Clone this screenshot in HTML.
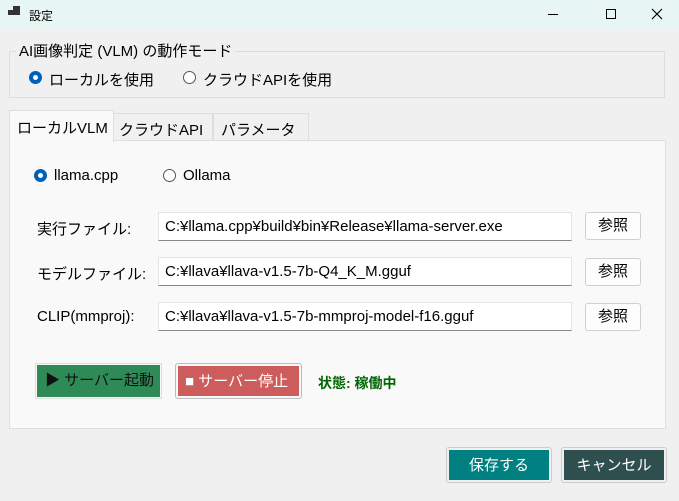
<!DOCTYPE html>
<html><head><meta charset="utf-8"><style>
*{box-sizing:border-box;margin:0;padding:0}
body{width:679px;height:501px;background:#f0f0f0;font-family:"Liberation Sans","Noto Sans CJK JP",sans-serif;font-size:15px;color:#000;position:relative;overflow:hidden}
.a{position:absolute;white-space:nowrap}
.title{left:0;top:0;width:679px;height:30px;background:#e8f6f3}
.radio{width:13px;height:13px;border-radius:50%;border:1px solid #555;background:#fff}
.radio.on{border:none;background:#005fb8}
.radio.on::after{content:"";position:absolute;left:4px;top:4px;width:5px;height:5px;border-radius:50%;background:#fff}
.tb{height:29px;background:#fff;border:1px solid #e4e4e4;border-bottom:1px solid #888;padding:5px 6px;font-size:15px}
.btn{background:#fdfdfd;border:1px solid #d0d0d0;border-radius:3px;text-align:center;line-height:26px}
</style></head><body>
<div class="a title"></div>
<div class="a" style="left:8px;top:10px;width:5px;height:5px;background:#333"></div>
<div class="a" style="left:13px;top:6px;width:7px;height:9px;background:#333"></div>
<div class="a" style="left:29px;top:7px;font-size:12px">設定</div>
<div class="a" style="left:548px;top:14px;width:10px;height:1px;background:#000"></div>
<div class="a" style="left:606px;top:9px;width:10px;height:10px;border:1px solid #000"></div>
<svg class="a" style="left:651px;top:8px" width="12" height="12"><path d="M1 1L11 11M11 1L1 11" stroke="#000" stroke-width="1.2"/></svg>

<div class="a" style="left:9px;top:51px;width:656px;height:47px;border:1px solid #dcdcdc"></div>
<div class="a" style="left:16px;top:40px;background:#f0f0f0;padding:0 3px">AI画像判定 (VLM) の動作モード</div>
<div class="a radio on" style="left:29px;top:71px"></div>
<div class="a" style="left:49px;top:69px">ローカルを使用</div>
<div class="a radio" style="left:183px;top:71px"></div>
<div class="a" style="left:203px;top:69px">クラウドAPIを使用</div>

<div class="a" style="left:9px;top:140px;width:657px;height:289px;background:#f9f9f9;border:1px solid #dedede"></div>
<div class="a" style="left:113px;top:113px;width:100px;height:28px;background:#f0f0f0;border:1px solid #dedede;padding:5px 5px">クラウドAPI</div>
<div class="a" style="left:213px;top:113px;width:96px;height:28px;background:#f0f0f0;border:1px solid #dedede;padding:5px 7px">パラメータ</div>
<div class="a" style="left:9px;top:110px;width:105px;height:32px;background:#f9f9f9;border:1px solid #dedede;border-bottom:none;padding:6px 7px">ローカルVLM</div>

<div class="a radio on" style="left:34px;top:169px"></div>
<div class="a" style="left:54px;top:167px">llama.cpp</div>
<div class="a radio" style="left:163px;top:169px"></div>
<div class="a" style="left:183px;top:167px">Ollama</div>

<div class="a" style="left:37px;top:218px">実行ファイル:</div>
<div class="a tb" style="left:158px;top:212px;width:414px">C:¥llama.cpp¥build¥bin¥Release¥llama-server.exe</div>
<div class="a btn" style="left:585px;top:212px;width:56px;height:28px">参照</div>
<div class="a" style="left:37px;top:263px">モデルファイル:</div>
<div class="a tb" style="left:158px;top:257px;width:414px">C:¥llava¥llava-v1.5-7b-Q4_K_M.gguf</div>
<div class="a btn" style="left:585px;top:258px;width:56px;height:28px">参照</div>
<div class="a" style="left:37px;top:308px">CLIP(mmproj):</div>
<div class="a tb" style="left:158px;top:302px;width:414px">C:¥llava¥llava-v1.5-7b-mmproj-model-f16.gguf</div>
<div class="a btn" style="left:585px;top:303px;width:56px;height:28px">参照</div>

<div class="a" style="left:35px;top:363px;width:127px;height:36px;border:1px solid #ddd;padding:1px"><div style="background:#2e8b57;height:100%;line-height:32px;padding-left:8px;color:#111">▶ サーバー起動</div></div>
<div class="a" style="left:175px;top:363px;width:127px;height:36px;border:1px solid #bbb;border-radius:3px;padding:2px"><div style="background:#cd5c5c;height:100%;line-height:31px;padding-left:7px;color:#fff">■ サーバー停止</div></div>
<div class="a" style="left:318px;top:373px;color:#006400;font-weight:bold;font-size:14px">状態: 稼働中</div>

<div class="a" style="left:446px;top:447px;width:106px;height:36px;border:1px solid #ccc;border-radius:3px;padding:2px"><div style="background:#008080;height:100%;line-height:31px;text-align:center;color:#fff">保存する</div></div>
<div class="a" style="left:561px;top:447px;width:106px;height:36px;border:1px solid #ccc;border-radius:3px;padding:2px"><div style="background:#2f4f4f;height:100%;line-height:31px;text-align:center;color:#fff">キャンセル</div></div>
</body></html>
